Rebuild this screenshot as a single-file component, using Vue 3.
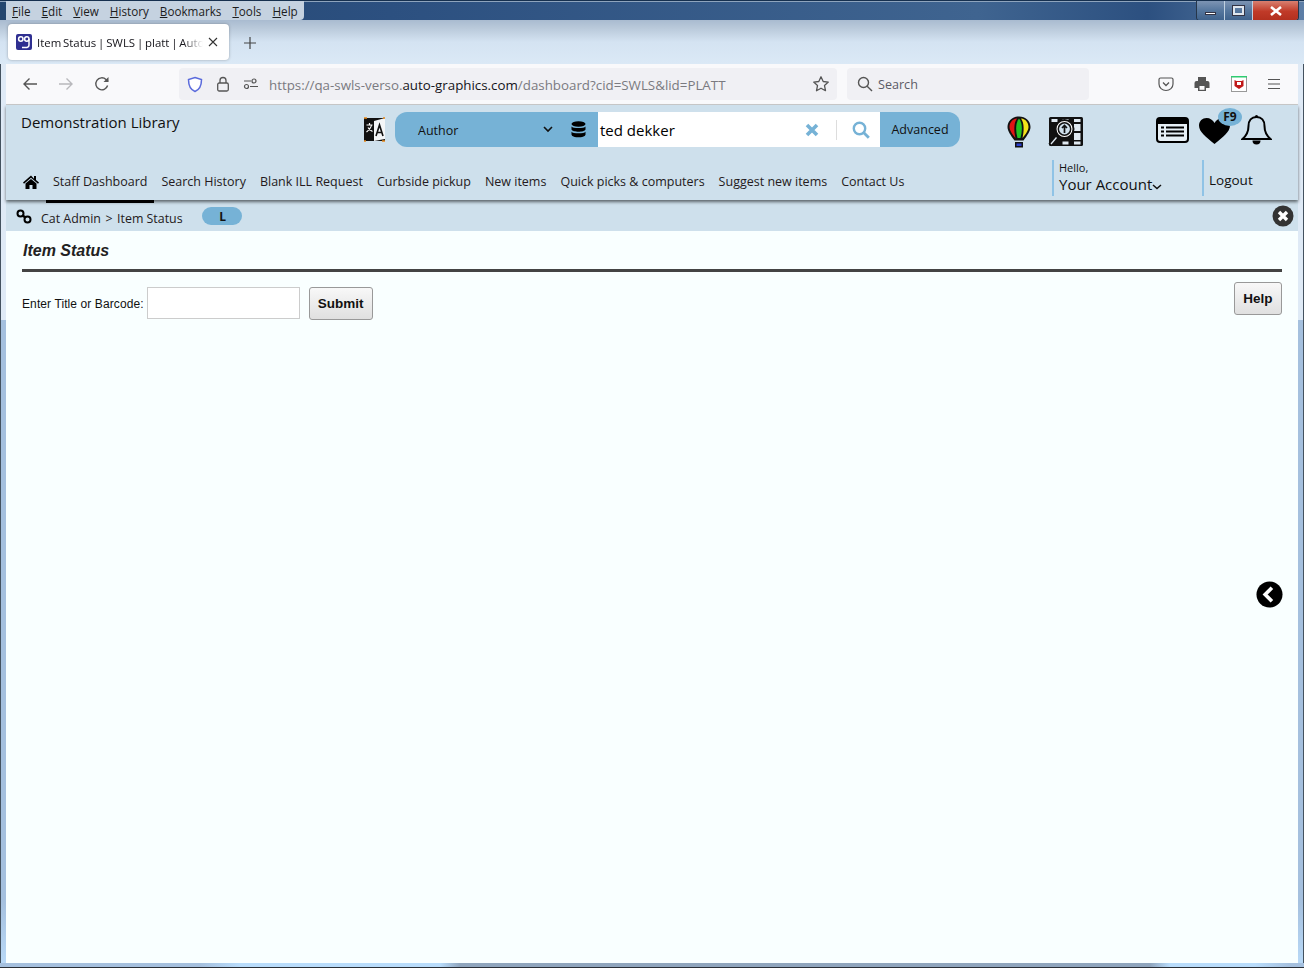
<template>
  <div class="window">
    <div class="titlebar">
      <div class="menubar">
        <span v-for="m in menus" :key="m.label" class="menu-item"><u>{{ m.key }}</u>{{ m.rest }}</span>
      </div>
      <div class="winbtns">
        <span class="winbtn"><i class="min-glyph"></i></span>
        <span class="winbtn"><i class="max-glyph"></i></span>
        <span class="winbtn close">
          <svg width="14" height="10" viewBox="0 0 14 10"><path d="M2 1l10 8M12 1L2 9" stroke="#fff" stroke-width="2.6" /></svg>
        </span>
      </div>
    </div>

    <div class="tabstrip">
      <div class="tab">
        <svg class="favicon" width="16" height="16" viewBox="0 0 16 16">
          <rect width="16" height="16" rx="2" fill="#2f2f91" />
          <circle cx="4.800" cy="5" r="2.200" fill="none" stroke="#fff" stroke-width="1.500" />
          <circle cx="10.800" cy="5" r="2.200" fill="none" stroke="#fff" stroke-width="1.500" />
          <path d="M13 5v6c0 2-2 2.600-4 2.600H6" fill="none" stroke="#fff" stroke-width="1.500" />
        </svg>
        <span class="tab-title">Item Status | SWLS | platt | Auto-</span>
        <svg width="10" height="10" viewBox="0 0 10 10"><path d="M1 1l8 8M9 1L1 9" stroke="#333" stroke-width="1.100" /></svg>
      </div>
      <svg class="newtab" width="14" height="14" viewBox="0 0 14 14"><path d="M7 1v12M1 7h12" stroke="#444" stroke-width="1.200" /></svg>
    </div>

    <div class="toolbar">
      <svg class="tool back" width="16" height="16" viewBox="0 0 16 16"><path d="M15 8H2M7.500 2.500L2 8l5.500 5.500" fill="none" stroke="#555" stroke-width="1.400" /></svg>
      <svg class="tool fwd" width="16" height="16" viewBox="0 0 16 16"><path d="M1 8h13M8.500 2.500L14 8l-5.500 5.500" fill="none" stroke="#b8b8bc" stroke-width="1.400" /></svg>
      <svg class="tool reload" width="16" height="16" viewBox="0 0 16 16"><path d="M13.600 9.500A6 6 0 1 1 12 3.500L14 5.500" fill="none" stroke="#555" stroke-width="1.400" /><path d="M14.500 1v5h-5z" fill="#555" /></svg>
      <div class="urlbar">
        <svg width="16" height="17" viewBox="0 0 16 17"><path d="M8 1.500l6.500 2c0 6-1.500 10-6.500 12-5-2-6.500-6-6.500-12z" fill="#fff" stroke="#5b6bdc" stroke-width="1.500" /></svg>
        <svg class="lock" width="14" height="16" viewBox="0 0 14 16"><rect x="1.700" y="7" width="10.600" height="8" rx="1.500" fill="none" stroke="#555" stroke-width="1.300" /><path d="M4 7V4.500a3 3 0 0 1 6 0V7" fill="none" stroke="#555" stroke-width="1.300" /></svg>
        <svg class="perm" width="16" height="12" viewBox="0 0 16 12"><circle cx="11" cy="3" r="2" fill="none" stroke="#555" stroke-width="1.200" /><circle cx="3.500" cy="8.500" r="2" fill="none" stroke="#555" stroke-width="1.200" /><path d="M1 3h7M7 8.500h8" stroke="#555" stroke-width="1.200" /></svg>
        <span class="url"><span class="dim">https://qa-swls-verso.</span>auto-graphics.com<span class="dim">/dashboard?cid=SWLS&amp;lid=PLATT</span></span>
        <svg width="18" height="18" viewBox="0 0 18 18"><path d="M9 1.800l2.200 4.700 5.100.6-3.800 3.500 1 5.100L9 13.200l-4.500 2.500 1-5.100-3.800-3.500 5.100-.6z" fill="none" stroke="#555" stroke-width="1.300" stroke-linejoin="round" /></svg>
      </div>
      <div class="searchbar">
        <svg width="16" height="16" viewBox="0 0 16 16"><circle cx="6.500" cy="6.500" r="5" fill="none" stroke="#555" stroke-width="1.400" /><path d="M10.200 10.200l4.800 4.800" stroke="#555" stroke-width="1.400" /></svg>
        <span class="search-word">Search</span>
      </div>
      <div class="tool-right">
        <svg width="16" height="16" viewBox="0 0 16 16"><path d="M2.500 2h11A1.500 1.500 0 0 1 15 3.500V8a7 6.500 0 0 1-14 0V3.500A1.500 1.500 0 0 1 2.500 2z" fill="none" stroke="#555" stroke-width="1.200" /><path d="M5 6.500l3 3 3-3" fill="none" stroke="#555" stroke-width="1.300" /></svg>
        <svg width="16" height="16" viewBox="0 0 16 16"><path d="M4 1h8v4H4zM2.500 5h11A2 2 0 0 1 15.500 7v5H12v3H4v-3H.5V7a2 2 0 0 1 2-2z" fill="#555" /><rect x="5.500" y="10" width="5" height="3.800" fill="#f9f9fb" /></svg>
        <svg width="16" height="16" viewBox="0 0 16 16"><rect x=".5" y=".5" width="15" height="15" fill="#fff" stroke="#999" /><rect width="16" height="1.500" fill="#2ecc71" /><path d="M3.500 4l2 1h5l2-1v6l-4.500 3-4.500-3z" fill="#c01818" /><rect x="6" y="6" width="4" height="3" fill="#fff" /></svg>
        <svg width="14" height="12" viewBox="0 0 14 12"><path d="M1 1.500h12M1 6h12M1 10.500h12" stroke="#555" stroke-width="1.200" /></svg>
      </div>
    </div>

    <div class="page">
      <header class="app-header">
        <div class="top-row">
          <div class="lib-name">Demonstration Library</div>
          <svg class="translate" width="23" height="25" viewBox="0 0 23 25">
            <rect x="1" y="1" width="21" height="23" fill="#111" />
            <path d="M11 4l11-3v21l-11 2z" fill="#f4f6f8" />
            <path d="M1 1h3M19 24h3M1 24h2M20 1h2" stroke="#e8891a" stroke-width="1.600" />
            <path d="M3.500 8h6M6.500 6v2M8.500 8c-.5 3-2.500 5-5 7M5 10.500c1 2 2.500 3 4.500 4" fill="none" stroke="#fff" stroke-width="1.200" />
            <path d="M13 19l3.500-11 3.500 11M14.300 15.500h4.400" fill="none" stroke="#111" stroke-width="1.600" />
          </svg>
          <div class="searchbox">
            <div class="search-type">
              <span class="type-label">Author</span>
              <svg class="chev" width="10" height="7" viewBox="0 0 10 7"><path d="M1 1l4 4 4-4" fill="none" stroke="#111" stroke-width="1.600" /></svg>
              <svg class="db" width="15" height="17" viewBox="0 0 15 17">
                <ellipse cx="7.500" cy="3" rx="7" ry="2.800" fill="#000" />
                <path d="M.5 5.500c1 2 13 2 14 0v3c-1 3-13 3-14 0zM.5 10.700c1 2 13 2 14 0v3c-1 3.500-13 3.500-14 0z" fill="#000" />
              </svg>
            </div>
            <div class="search-input">
              <span class="query">ted dekker</span>
              <svg width="14" height="14" viewBox="0 0 14 14"><path d="M2 2l10 10M12 2L2 12" stroke="#76b2d6" stroke-width="3.600" /></svg>
              <i class="sep"></i>
              <svg class="mag" width="18" height="18" viewBox="0 0 18 18"><circle cx="7.500" cy="7.500" r="5.700" fill="none" stroke="#76b2d6" stroke-width="2.400" /><path d="M11.800 11.800l5 5" stroke="#76b2d6" stroke-width="2.800" /></svg>
            </div>
            <div class="advanced">Advanced</div>
          </div>
          <svg class="balloon" width="24" height="32" viewBox="0 0 24 32">
            <path d="M12 .5C5.500.5.500 5 .5 11c0 4 3 8 7 13.500h9c4-5.500 7-9.500 7-13.500C23.500 5 18.500.5 12 .5z" fill="#111" />
            <path d="M10 2.500C5 3 2.500 7 2.500 11c0 3.500 3 7.500 6 11C7 16 6.500 7 10 2.500z" fill="#e01515" />
            <path d="M12 2.500C8.500 7 8.500 15 10.500 22h3c2-7 2-15-1.500-19.500z" fill="#22c222" />
            <path d="M14 2.500c5 .5 7.500 4.500 7.500 8.500 0 3.500-3 7.500-6 11 1.500-6 2-15-1.500-19.500z" fill="#f2e21a" />
            <rect x="8" y="26" width="8" height="5.500" fill="#111" />
            <rect x="9.500" y="27.500" width="5" height="2.500" fill="#2a3ed0" />
          </svg>
          <svg class="film" width="35" height="32" viewBox="0 0 35 32">
            <rect x="1" y="1" width="34" height="29" rx="1.500" fill="#111" />
            <g fill="#dfe9f1">
              <rect x="3.500" y="3" width="6" height="3" /><rect x="14.500" y="3" width="6" height="3" /><rect x="26" y="3" width="6.500" height="3" />
              <rect x="14.500" y="25.500" width="6" height="3" /><rect x="26" y="25.500" width="6.500" height="3" />
              <rect x="26" y="8" width="6.500" height="7" /><rect x="26" y="17" width="6.500" height="7" />
            </g>
            <circle cx="16.500" cy="13" r="9" fill="#fff" stroke="#111" stroke-width="2" />
            <circle cx="16.500" cy="13" r="6.200" fill="#cfe0ec" stroke="#111" stroke-width="1.500" />
            <path d="M16.500 17v-7M14 12l2.500-2.500L19 12" fill="none" stroke="#111" stroke-width="1.700" />
            <path d="M9.500 20L2 29" stroke="#111" stroke-width="4" />
            <path d="M8.500 21.500L3 28" stroke="#dfe9f1" stroke-width="1.300" />
          </svg>
          <svg class="listicon" width="33" height="26" viewBox="0 0 33 26">
            <rect x="1" y="1" width="31" height="24" rx="3" fill="#e6eff5" stroke="#000" stroke-width="2" />
            <rect x="2" y="2" width="29" height="5" fill="#000" />
            <path d="M5 10.500h3M5 14.500h3M5 18.500h3M10 10.500h18M10 14.500h18M10 18.500h18" stroke="#000" stroke-width="2" />
          </svg>
          <div class="fav">
            <svg width="33" height="28" viewBox="0 0 33 28"><path d="M16.500 27C8 20 1 15 1 8.500 1 4 4.500 1 8.500 1c3.500 0 6.500 2 8 5 1.500-3 4.500-5 8-5 4 0 7.500 3 7.500 7.500C32 15 25 20 16.500 27z" fill="#000" /></svg>
            <span class="f9">F9</span>
          </div>
          <svg class="bell" width="31" height="33" viewBox="0 0 31 33">
            <path d="M15.500 3c-5 0-8 3.500-8 9 0 6-2.500 10-6 13h28c-3.500-3-6-7-6-13 0-5.500-3-9-8-9z" fill="none" stroke="#000" stroke-width="2" />
            <circle cx="15.500" cy="2.500" r="1.600" fill="#000" />
            <path d="M11.500 26.500a4 4 0 0 0 8 0z" fill="#000" />
          </svg>
        </div>
        <div class="nav-row">
          <nav class="nav">
            <svg class="home" width="16" height="14" viewBox="0 0 16 14"><path d="M8 .5L0 7.500l1 1.200L8 2.800l7 5.900 1-1.200-3-2.600V1h-2v2.700z" fill="#000" /><path d="M8 4L2.500 8.600V14h4v-4h3v4h4V8.600z" fill="#000" /></svg>
            <a v-for="(n, i) in navItems" :key="n" class="nav-link" :class="{ active: i === 0 }">{{ n }}</a>
          </nav>
          <div class="account">
            <span class="hello">Hello,</span>
            <span class="your">Your Account<svg width="10" height="6" viewBox="0 0 10 6"><path d="M1 1l4 3.500L9 1" fill="none" stroke="#111" stroke-width="1.500" /></svg></span>
          </div>
          <div class="logout">Logout</div>
        </div>
      </header>

      <div class="crumbs">
        <svg class="chain" width="16" height="15" viewBox="0 0 16 15"><circle cx="4.500" cy="4.500" r="3" fill="none" stroke="#000" stroke-width="2" /><circle cx="11.500" cy="10.500" r="3" fill="none" stroke="#000" stroke-width="2" /><path d="M6.500 6.500l3 2" stroke="#000" stroke-width="2.400" /></svg>
        <span class="trail">Cat Admin<span class="gt">&gt;</span>Item Status</span>
        <span class="pill">L</span>
        <svg class="crumb-close" width="22" height="22" viewBox="0 0 22 22"><circle cx="11" cy="11" r="10.500" fill="#333" /><path d="M7 7l8 8M15 7l-8 8" stroke="#fff" stroke-width="3.400" /></svg>
      </div>

      <main class="content">
        <h1 class="title">Item Status</h1>
        <div class="form-row">
          <label class="label">Enter Title or Barcode:</label>
          <input class="field" type="text" />
          <button class="btn submit">Submit</button>
          <button class="btn help">Help</button>
        </div>
        <svg class="side-toggle" width="27" height="27" viewBox="0 0 28 28"><circle cx="14" cy="14" r="13.500" fill="#000" /><path d="M16.500 7l-7 7 7 7" fill="none" stroke="#fff" stroke-width="3.800" /></svg>
      </main>
    </div>
    <div class="bottom-frame"></div>
  </div>
</template>

<script setup>
const menus = [
  { label: 'File', key: 'F', rest: 'ile' },
  { label: 'Edit', key: 'E', rest: 'dit' },
  { label: 'View', key: 'V', rest: 'iew' },
  { label: 'History', key: 'H', rest: 'istory' },
  { label: 'Bookmarks', key: 'B', rest: 'ookmarks' },
  { label: 'Tools', key: 'T', rest: 'ools' },
  { label: 'Help', key: 'H', rest: 'elp' }
]

const navItems = [
  'Staff Dashboard',
  'Search History',
  'Blank ILL Request',
  'Curbside pickup',
  'New items',
  'Quick picks & computers',
  'Suggest new items',
  'Contact Us'
]
</script>

<style>
html, body {
  margin: 0;
  height: 100%;
  overflow: hidden;
}
</style>

<style scoped>
.window {
  width: 1304px;
  height: 968px;
  box-sizing: border-box;
  display: flex;
  flex-direction: column;
  padding: 0 6px;
  font-family: "Open Sans", "Liberation Sans", sans-serif;
  color: #111;
  background: linear-gradient(#dfeaf6 0, #dfeaf6 320px, #a5c0de 320px, #a5c0de 900px, #b8d8f6 961px);
  box-shadow: inset 1px 0 0 #44525f, inset -1px 0 0 #44525f, inset 0 -1px 0 #2a2f36;
}

.titlebar {
  height: 20px;
  flex: none;
  margin: 0 -6px;
  padding-left: 6px;
  display: flex;
  justify-content: space-between;
  background: linear-gradient(90deg, #24466f, #2c5080 30%, #3f6490 75%, #2c5080 88%, #5d7ea6);
  border-top: 1px solid #16304f;
  box-shadow: inset 0 1px 0 #8ea4bd;
  box-sizing: border-box;
}

.menubar {
  display: flex;
  gap: 11px;
  height: 19px;
  padding: 0 6px;
  background: #c5d2e0;
  border-radius: 0 0 4px 0;
  font-size: 11.700px;
  line-height: 20px;
  color: #1c1c1c;
}

.winbtns {
  display: flex;
  height: 19px;
  margin-right: 5px;
  border: 1px solid #26364a;
  border-top: none;
  border-radius: 0 0 4px 4px;
  overflow: hidden;
}

.winbtn {
  width: 27px;
  display: flex;
  align-items: center;
  justify-content: center;
  background: linear-gradient(#7d94b3, #56779e 50%, #3f628c);
  border-right: 1px solid #c0d0e0;
}

.winbtn.close {
  width: 45px;
  border-right: none;
  background: linear-gradient(#d88070, #c03a28 55%, #b3301f);
}

.min-glyph {
  width: 11px;
  height: 3px;
  margin-top: 5px;
  background: #fff;
  border: 1px solid #334;
  box-sizing: border-box;
}

.max-glyph {
  width: 11px;
  height: 9px;
  box-sizing: border-box;
  border: 2px solid #dfe6ee;
  outline: 1px solid #334;
}

.tabstrip {
  height: 44px;
  flex: none;
  display: flex;
  align-items: flex-start;
  padding: 4px 2px 0 8px;
  box-sizing: border-box;
  margin: 0 -6px;
  background: linear-gradient(#a9bbd0 0, #b9c9da 8px, #d4e3f2 22px, #dbe9f6 100%);
}

.tab {
  width: 221px;
  height: 36px;
  box-sizing: border-box;
  display: flex;
  align-items: center;
  padding: 0 11px 0 8px;
  background: #fff;
  border-radius: 4px;
  box-shadow: 0 0 3px rgba(0, 0, 0, 0.3);
  font-size: 11.400px;
}

.favicon {
  flex: none;
}

.tab-title {
  flex: 1;
  min-width: 0;
  width: 0;
  margin: 0 5px;
  white-space: nowrap;
  word-spacing: -1.100px;
  -webkit-mask-image: linear-gradient(90deg, #000 88%, transparent);
  mask-image: linear-gradient(90deg, #000 88%, transparent);
  color: #15141a;
}

.newtab {
  margin: 12px 0 0 14px;
}

.toolbar {
  height: 41px;
  flex: none;
  box-sizing: border-box;
  display: flex;
  align-items: center;
  background: #f9f9fb;
  border-bottom: 1px solid #ccc;
}

.tool {
  flex: none;
}

.back {
  margin-left: 16px;
}

.fwd,
.reload {
  margin-left: 20px;
}

.urlbar {
  width: 658px;
  height: 32px;
  margin-left: 69px;
  box-sizing: border-box;
  display: flex;
  align-items: center;
  padding: 0 7px 0 8px;
  background: #f0f0f4;
  border-radius: 4px;
  font-size: 13.330px;
}

.lock,
.perm {
  margin-left: 13px;
}

.url {
  flex: 1;
  margin: 1px 0 0 10px;
  white-space: nowrap;
  color: #15141a;
}

.dim {
  color: #7a7a80;
}

.searchbar {
  width: 242px;
  height: 32px;
  margin-left: 10px;
  box-sizing: border-box;
  display: flex;
  align-items: center;
  gap: 5px;
  padding-left: 10px;
  background: #f0f0f4;
  border-radius: 4px;
  font-size: 12.600px;
  color: #5b5b66;
}

.search-word {
  margin-top: 1px;
}

.tool-right {
  flex: 1;
  display: flex;
  align-items: center;
  justify-content: space-between;
  padding: 0 17px 0 69px;
}

.page {
  flex: 1;
  min-height: 0;
  display: flex;
  flex-direction: column;
  background: #f9ffff;
}

.app-header {
  height: 95px;
  flex: none;
  background: #cee0ec;
  box-shadow: 0 2px 3px rgba(0, 0, 0, 0.55);
  display: flex;
  flex-direction: column;
  position: relative;
  z-index: 1;
}

.top-row {
  height: 48px;
  flex: none;
  display: flex;
  align-items: flex-start;
  padding-top: 7px;
  box-sizing: border-box;
}

.lib-name {
  width: 342px;
  padding-left: 15px;
  box-sizing: border-box;
  font-size: 15px;
  line-height: 21px;
}

.translate {
  margin: 5px 0 0 15px;
  flex: none;
}

.searchbox {
  width: 565px;
  height: 35px;
  margin-left: 9px;
  display: flex;
  flex: none;
  border-radius: 12px;
  overflow: hidden;
}

.search-type {
  width: 203px;
  display: flex;
  align-items: center;
  background: #76b2d6;
  font-size: 12.500px;
  padding-left: 23px;
  box-sizing: border-box;
}

.type-label {
  flex: 1;
  margin-top: 1px;
}

.chev {
  margin-right: 18px;
}

.db {
  margin-right: 12px;
}

.search-input {
  flex: 1;
  display: flex;
  align-items: center;
  background: #fff;
  padding-left: 2px;
}

.query {
  flex: 1;
  font-size: 15px;
  color: #000;
}

.sep {
  width: 1px;
  height: 20px;
  margin: 0 15px 0 17px;
  background: #ddd;
}

.mag {
  margin-right: 10px;
}

.advanced {
  width: 80px;
  display: flex;
  align-items: center;
  justify-content: center;
  background: #76b2d6;
  font-size: 12.500px;
}

.balloon {
  margin: 4px 0 0 47px;
  flex: none;
}

.film {
  margin: 4px 0 0 17px;
  flex: none;
}

.listicon {
  margin: 5px 0 0 73px;
  flex: none;
}

.fav {
  position: relative;
  margin: 5px 0 0 9px;
  height: 28px;
  flex: none;
}

.f9 {
  position: absolute;
  top: -9px;
  left: 20px;
  width: 24px;
  height: 18px;
  border-radius: 50%;
  background: #76b2d6;
  font-size: 12px;
  font-weight: 700;
  line-height: 17px;
  text-align: center;
}

.bell {
  margin: 2px 0 0 10px;
  flex: none;
}

.nav-row {
  flex: 1;
  min-height: 0;
  display: flex;
}

.nav {
  width: 1046px;
  display: flex;
  align-items: flex-start;
  padding: 11px 0 0 17px;
  box-sizing: border-box;
}

.home {
  margin: 11px 7px 0 0;
  flex: none;
}

.nav-link {
  height: 36px;
  padding: 0 7px;
  box-sizing: border-box;
  line-height: 36px;
  font-size: 12.500px;
  white-space: nowrap;
  color: #241a20;
}

.nav-link.active {
  height: 39px;
  margin-bottom: -3px;
  border-bottom: 3px solid #000;
}

.account {
  width: 150px;
  height: 36px;
  margin-top: 7px;
  padding-left: 5px;
  box-sizing: border-box;
  border-left: 2px solid #8fc3e6;
  display: flex;
  flex-direction: column;
}

.hello {
  font-size: 11px;
  line-height: 16px;
}

.your {
  font-size: 15px;
  line-height: 16px;
  white-space: nowrap;
}

.logout {
  height: 36px;
  margin-top: 7px;
  padding-left: 5px;
  border-left: 2px solid #8fc3e6;
  font-size: 13.500px;
  line-height: 40px;
}

.crumbs {
  height: 31px;
  flex: none;
  box-sizing: border-box;
  padding-top: 5px;
  display: flex;
  align-items: center;
  background: #cee0ec;
}

.chain {
  margin: -3px 0 0 10px;
}

.trail {
  margin-left: 9px;
  font-size: 12.400px;
  color: #241a20;
}

.gt {
  margin: 0 4.500px;
}

.pill {
  width: 40px;
  height: 18px;
  margin: -4px 0 0 19px;
  padding-left: 2px;
  box-sizing: border-box;
  border-radius: 9px;
  background: #76b2d6;
  font-size: 12px;
  font-weight: 700;
  line-height: 20px;
  text-align: center;
}

.crumb-close {
  margin: -4px 4px 0 auto;
}

.content {
  flex: 1;
  position: relative;
  padding: 0 16px;
}

.title {
  margin: 0;
  height: 41px;
  padding-left: 1px;
  box-sizing: border-box;
  border-bottom: 3px solid #444;
  font: italic 700 16px/39px "Liberation Sans", sans-serif;
  color: #222;
}

.form-row {
  display: flex;
  align-items: flex-start;
  padding-top: 15px;
  font-family: "Liberation Sans", sans-serif;
}

.label {
  font-size: 12px;
  line-height: 34px;
  margin-right: 3px;
  letter-spacing: 0.100px;
}

.field {
  width: 153px;
  height: 32px;
  box-sizing: border-box;
  border: 1px solid #ccc;
  background: #fff;
}

.btn {
  height: 33px;
  padding: 0;
  border: 1px solid #999;
  border-radius: 3px;
  background: linear-gradient(#f8f8f8, #e0e0e0);
  font: 700 13.500px "Liberation Sans", sans-serif;
  color: #111;
}

.submit {
  width: 64px;
  margin-left: 9px;
}

.help {
  width: 48px;
  margin: -5px 0 0 auto;
}

.side-toggle {
  position: absolute;
  top: 350px;
  right: 15px;
}

.bottom-frame {
  height: 5px;
  flex: none;
  margin: 0 -6px;
  border-bottom: 1px solid #2a2f36;
  box-sizing: border-box;
  background: linear-gradient(90deg, #a5c0de 200px, #b8dcfb 240px, #b8dcfb 440px, #8fa5bd 460px, #8fa5bd 1150px, #b8dcfb 1170px, #b8dcfb 1255px, #a5c0de 1290px);
}
</style>
